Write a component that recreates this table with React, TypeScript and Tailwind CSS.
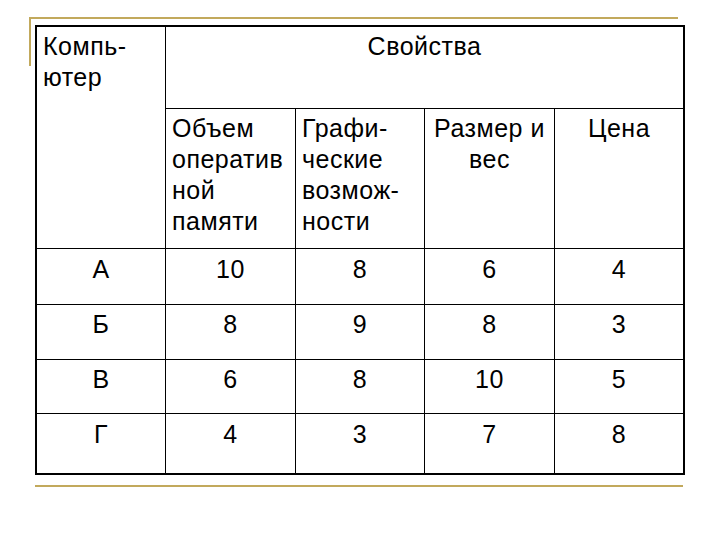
const rows = [
  { pad: "pt-[5px]", cells: ["А", "10", "8", "6", "4"] },
  { pad: "pt-[4px]", cells: ["Б", "8", "9", "8", "3"] },
  { pad: "pt-[4px]", cells: ["В", "6", "8", "10", "5"] },
  { pad: "pt-[5px]", cells: ["Г", "4", "3", "7", "8"] },
];

const App = () => {
  return (
    <div
      className="w-[720px] h-[540px] bg-white text-black pl-[29px] pt-[17px]"
      style={{ fontFamily: '"Liberation Sans", Arial, sans-serif' }}
    >
      <div className="w-[649px] h-[2px] bg-[#c2a95c]" />
      <div className="flex">
        <div className="shrink-0 w-[2px] h-[47px] bg-[#c2a95c]" />
        <div className="shrink-0 ml-[4px] mt-[6px]">
          <div className="grid grid-cols-[128px_129px_128px_129px_128px] grid-rows-[81px_139px_55px_54px_53px_59px] gap-px bg-black border-2 border-black text-[25px] leading-[31px] tracking-[0.5px]">
            <div className="row-span-2 bg-white pl-[6px] pt-[4px]">
              Компь-
              <br />
              ютер
            </div>
            <div className="col-span-4 bg-white pt-[4px] text-center">Свойства</div>
            <div className="bg-white pl-[6px] pt-[4px]">
              Объем
              <br />
              оператив
              <br />
              ной
              <br />
              памяти
            </div>
            <div className="bg-white pl-[6px] pt-[4px]">
              Графи-
              <br />
              ческие
              <br />
              возмож-
              <br />
              ности
            </div>
            <div className="bg-white pt-[4px] text-center">
              Размер и
              <br />
              вес
            </div>
            <div className="bg-white pt-[4px] text-center">Цена</div>
            {rows.map((row) =>
              row.cells.map((cell, i) => (
                <div key={row.cells[0] + i} className={`bg-white text-center ${row.pad}`}>
                  {cell}
                </div>
              ))
            )}
          </div>
          <div className="mt-[10px] h-[2px] w-[648px] bg-[#c2a95c]" />
        </div>
      </div>
    </div>
  );
};

export default App;
